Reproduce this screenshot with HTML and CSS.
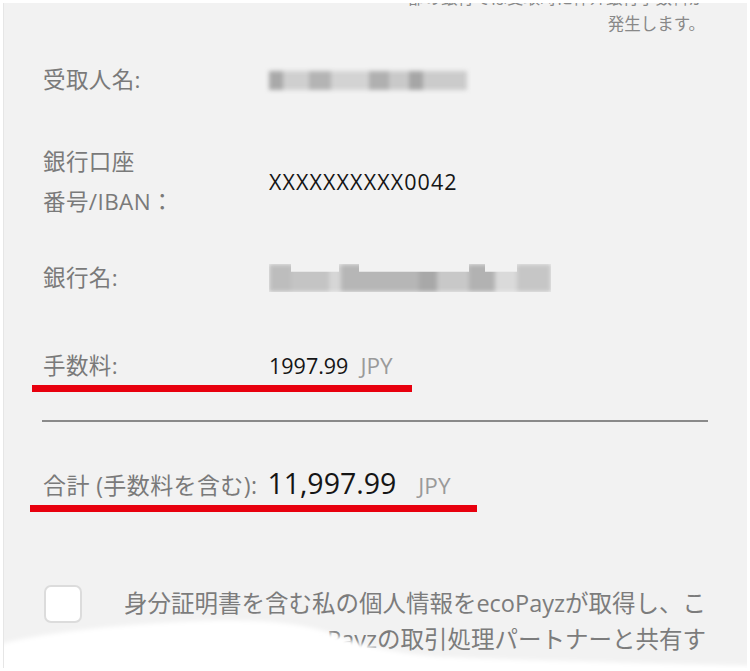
FILE: index.html
```html
<!DOCTYPE html>
<html lang="ja">
<head>
<meta charset="utf-8">
<title>送金確認</title>
<link rel="stylesheet" href="styles.css">
</head>
<body>
<div class="frame">
  <div class="panel">
    <p class="note">一部の銀行では受取時に仲介銀行手数料が<br>発生します。</p>

    <div class="row row-name">
      <div class="label">受取人名:</div>
      <div class="value"><span class="blur blur-name"></span></div>
    </div>

    <div class="row row-iban">
      <div class="label label-two">銀行口座<br>番号/IBAN：</div>
      <div class="value mono">XXXXXXXXXX0042</div>
    </div>

    <div class="row row-bank">
      <div class="label">銀行名:</div>
      <div class="value"><span class="blur blur-bank"></span></div>
    </div>

    <div class="row row-fee marked">
      <div class="label">手数料:</div>
      <div class="value">1997.99<span class="cur">JPY</span></div>
    </div>

    <hr class="divider">

    <div class="total marked marked-total">
      <span class="label">合計 (手数料を含む):</span>
      <span class="amount">11,997.99</span><span class="cur cur-total">JPY</span>
    </div>

    <div class="consent">
      <span class="checkbox"></span>
      <p class="consent-text">身分証明書を含む私の個人情報をecoPayzが取得し、こ<br>れをecoPayzの取引処理パートナーと共有す</p>
    </div>

    <svg class="wave" viewBox="0 0 750 60" width="750" height="60" preserveAspectRatio="none" aria-hidden="true">
      <defs>
        <filter id="soft" x="-5%" y="-50%" width="110%" height="200%">
          <feGaussianBlur stdDeviation="2"/>
        </filter>
      </defs>
      <path filter="url(#soft)" fill="#ffffff" d="M-10,36 C30,24 100,14 200,10 C260,8 300,12 330,22 C360,34 390,42 440,46 C540,50 650,52 760,55 L760,70 L-10,70 Z"/>
    </svg>
  </div>
</div>
</body>
</html>
```

FILE: styles.css
```css
html, body {
  margin: 0;
  padding: 0;
  background: #ffffff;
}

body {
  font-family: "Open Sans", "Noto Sans CJK JP", sans-serif;
  width: 750px;
  height: 671px;
  overflow: hidden;
}

.frame {
  padding: 3px;
  height: 665px;
}

.panel {
  position: relative;
  height: 665px;
  background: #f2f2f2;
  border-left: 1px solid #e6e6e6;
  overflow: hidden;
  padding: 0 44px 0 39px;
  box-sizing: border-box;
}

.note {
  margin: -18px -2px 0 0;
  text-align: right;
  font-size: 16.5px;
  line-height: 26px;
  color: #888888;
}

.row {
  display: grid;
  grid-template-columns: 226px 1fr;
  align-items: center;
  position: relative;
}

.row-name { margin-top: 26px; }
.row-iban { margin-top: 45px; }
.row-bank { margin-top: 39px; }
.row-fee  { margin-top: 54px; }

.label {
  font-size: 22.5px;
  line-height: 34px;
  color: #7a7a7a;
  letter-spacing: 0.4px;
}

.label-two {
  line-height: 40px;
}

.value {
  font-size: 21.5px;
  line-height: 34px;
  color: #151515;
  display: flex;
  align-items: center;
}

.mono {
  letter-spacing: 1.1px;
}

.cur {
  color: #9a9a9a;
  font-size: 22.5px;
  margin-left: 12px;
}

.blur {
  display: block;
  filter: blur(2px);
}

.blur-name {
  width: 198px;
  height: 19px;
  background:
    linear-gradient(90deg,
      #a9a9a9 0 14px, #cfcfcf 14px 40px, #b4b4b4 40px 62px, #d3d3d3 62px 100px,
      #b0b0b0 100px 120px, #c9c9c9 120px 140px, #a6a6a6 140px 154px, #cbcbcb 154px 198px);
}

.blur-bank {
  width: 282px;
  height: 28px;
  background:
    linear-gradient(90deg,
      #bdbdbd 0 22px, #c4c4c4 22px 60px, #d6d6d6 60px 72px, #b6b6b6 72px 150px,
      #a8a8a8 150px 168px, #c8c8c8 168px 200px, #b2b2b2 200px 226px, #dadada 226px 248px,
      #c6c6c6 248px 282px);
  clip-path: polygon(0 0, 22px 0, 22px 28%, 70px 28%, 70px 0, 90px 0, 90px 28%, 200px 28%, 200px 0, 216px 0, 216px 28%, 248px 28%, 248px 0, 282px 0, 282px 100%, 0 100%);
}

.marked::after {
  content: "";
  position: absolute;
  height: 7px;
  background: #e8000e;
}

.row-fee.marked::after {
  left: -11px;
  width: 380px;
  bottom: -9px;
}

.divider {
  margin: 37px 0 0 -1px;
  width: 666px;
  height: 0;
  border: 0;
  border-top: 2px solid #8a8a8a;
}

.total {
  position: relative;
  margin-top: 41px;
  display: flex;
  align-items: baseline;
  line-height: 40px;
}

.total .label {
  font-size: 23px;
  margin-right: 10px;
}

.amount {
  font-size: 28.5px;
  color: #151515;
}

.cur-total {
  margin-left: 22px;
}

.marked-total::after {
  width: 447px;
  left: -13px;
  bottom: -6px;
}

.consent {
  margin-top: 79px;
  display: flex;
  align-items: flex-start;
  gap: 41px;
  margin-right: -3px;
}

.checkbox {
  flex: none;
  width: 34px;
  height: 34px;
  margin-left: 1px;
  background: #ffffff;
  border: 2px solid #dcdcdc;
  border-radius: 7px;
}

.consent-text {
  flex: 1;
  margin: 0;
  font-size: 23.5px;
  line-height: 36px;
  color: #7c7c7c;
  text-align: right;
  white-space: nowrap;
}

.wave {
  position: absolute;
  left: -4px;
  bottom: -3px;
  width: 750px;
  height: 60px;
}
```
